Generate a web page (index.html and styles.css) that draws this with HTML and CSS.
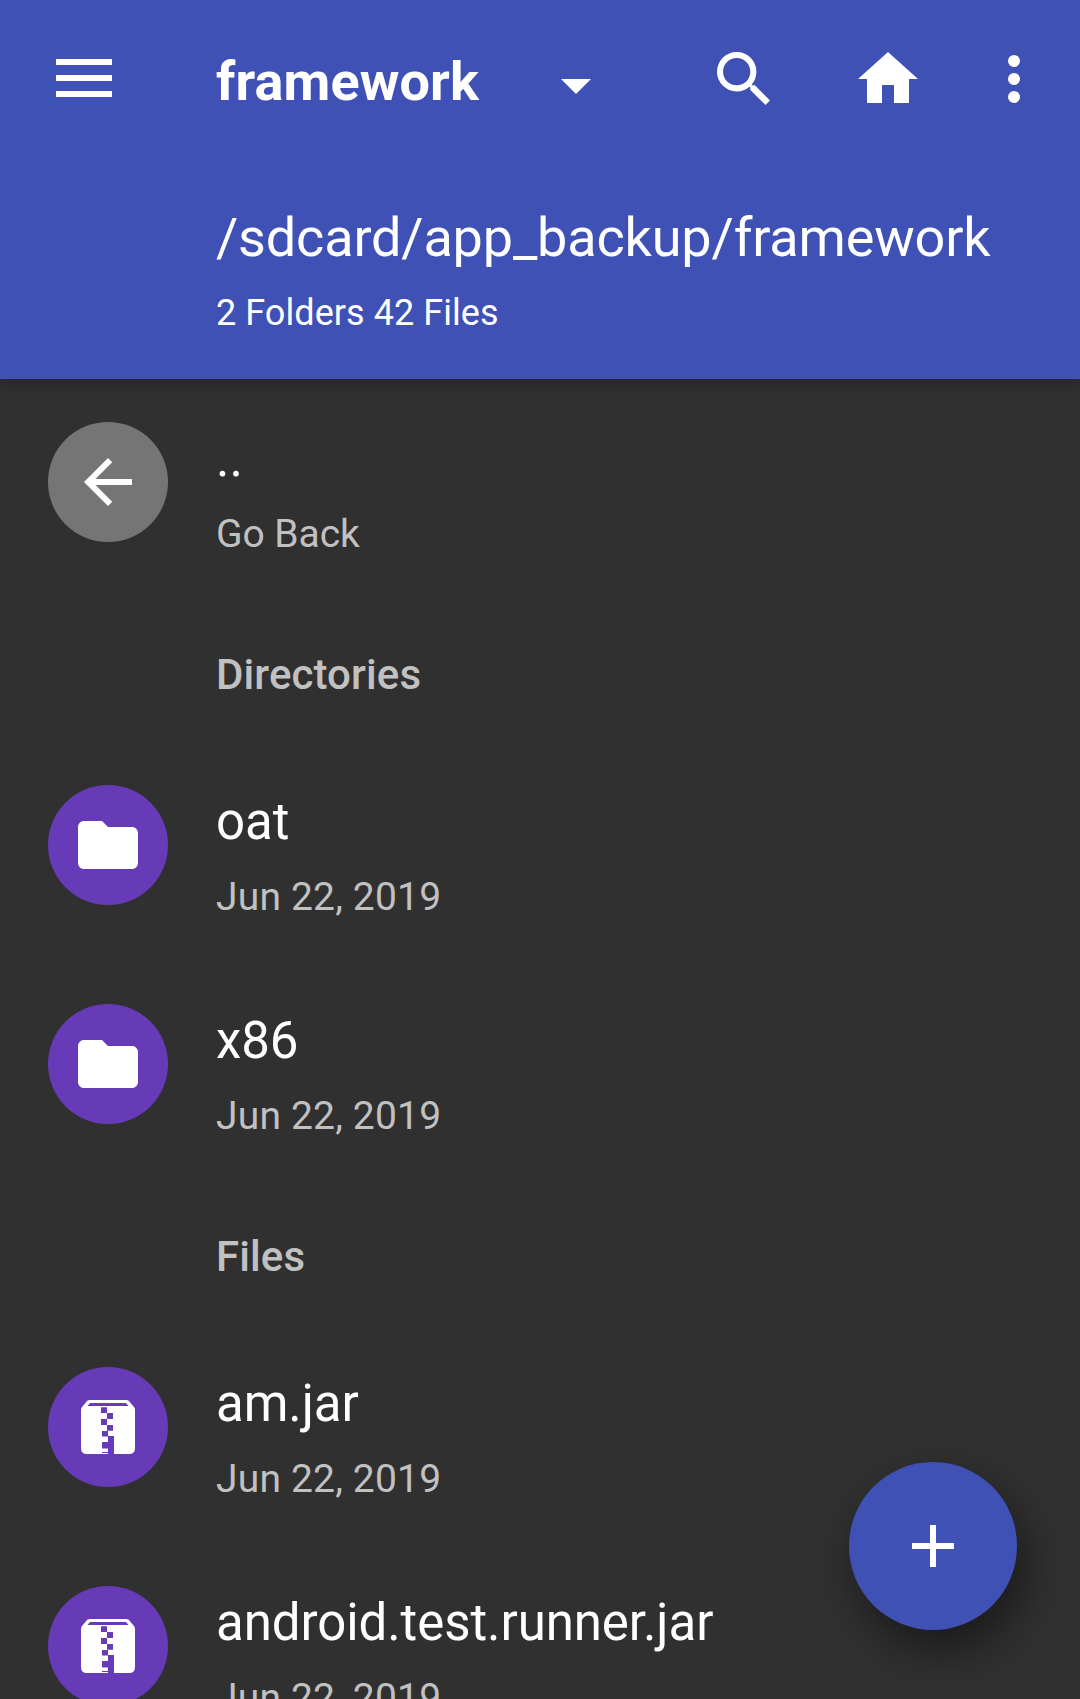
FILE: index.html
```html
<!DOCTYPE html>
<html lang="en">
<head>
<meta charset="utf-8">
<title>framework</title>
<link rel="stylesheet" href="styles.css">
</head>
<body>
<svg class="defs" aria-hidden="true">
  <symbol id="folder" viewBox="0 0 24 24"><path d="M10 4H4c-1.100 0-1.990.9-1.990 2L2 18c0 1.100.9 2 2 2h16c1.100 0 2-.9 2-2V8c0-1.100-.9-2-2-2h-8l-2-2z"/></symbol>
  <symbol id="archive" viewBox="0 0 54 54"><path d="M9 0H45Q47 0 48 1L53 7Q54 8 54 10V48Q54 54 48 54H6Q0 54 0 48V10Q0 8 1 7L6 1Q7 0 9 0Z"/><path class="cut" d="M9 3H45L47.500 6H6.500ZM20 7.300h6v5.700h-6zM26 13h6v6h-6zM20 19h6v6h-6zM26 25h6v5.700h-6zM21 31h6v5.500h-6zM27 36h6v18h-6zM21 42h6v6.500h-6zM21 52h6v1h-6z"/></symbol>
</svg>
<header class="appbar">
  <div class="toolbar">
    <svg class="menu" viewBox="0 0 56 38"><path d="M0 0h56v6H0zM0 16h56v6H0zM0 32h56v6H0z"/></svg>
    <h1 class="title">framework</h1>
    <svg class="caret" viewBox="0 0 30 15"><path d="M0 0h30L15 15z"/></svg>
    <svg class="search" viewBox="3 3 17.490 17.490"><path d="M15.500 14h-.79l-.28-.27A6.470 6.470 0 0 0 16 9.500 6.500 6.500 0 1 0 9.500 16c1.610 0 3.090-.59 4.230-1.570l.27.28v.79l5 4.990L20.490 19l-4.990-5zm-6 0C7.010 14 5 11.990 5 9.500S7.010 5 9.500 5 14 7.010 14 9.500 11.990 14 9.500 14z"/></svg>
    <svg class="home" viewBox="2 3 20 17"><path d="M10 20v-6h4v6h5v-8h3L12 3 2 12h3v8z"/></svg>
    <svg class="more" viewBox="0 0 12 48"><circle cx="6" cy="6" r="6"/><circle cx="6" cy="24" r="6"/><circle cx="6" cy="42" r="6"/></svg>
  </div>
  <div class="path">/sdcard/app_backup/framework</div>
  <div class="count">2 Folders 42 Files</div>
</header>
<main class="list">
  <div class="row"><span class="avatar back"><svg class="arrow" viewBox="4 4 16 16"><path d="M20 11H7.830l5.590-5.590L12 4l-8 8 8 8 1.410-1.410L7.830 13H20v-2z"/></svg></span><div class="info"><div class="name">..</div><div class="meta">Go Back</div></div></div>
  <h2 class="section">Directories</h2>
  <div class="row"><span class="avatar"><svg class="folder"><use href="#folder"/></svg></span><div class="info"><div class="name">oat</div><div class="meta date">Jun 22, 2019</div></div></div>
  <div class="row"><span class="avatar"><svg class="folder"><use href="#folder"/></svg></span><div class="info"><div class="name">x86</div><div class="meta date">Jun 22, 2019</div></div></div>
  <h2 class="section">Files</h2>
  <div class="row"><span class="avatar"><svg class="archive"><use href="#archive"/></svg></span><div class="info"><div class="name">am.jar</div><div class="meta date">Jun 22, 2019</div></div></div>
  <div class="row"><span class="avatar"><svg class="archive"><use href="#archive"/></svg></span><div class="info"><div class="name">android.test.runner.jar</div><div class="meta date">Jun 22, 2019</div></div></div>
</main>
<button class="fab" aria-label="Add"><svg class="plus" viewBox="0 0 42 42"><path d="M18 0h6v18h18v6H24v18h-6V24H0v-6h18z"/></svg></button>
</body>
</html>
```
FILE: styles.css
```css
* { box-sizing: border-box; }
body { margin: 0; height: 1699px; overflow: hidden; position: relative; background: #303030; color: #fff; font-family: Roboto, sans-serif; }
svg { display: block; fill: currentColor; flex: none; }
.defs { position: absolute; width: 0; height: 0; }
.appbar { position: relative; height: 379px; background: #3f51b5; box-shadow: 0 4px 12px rgba(0,0,0,.25); }
.toolbar { display: flex; align-items: center; height: 156px; padding-left: 56px; }
.menu { width: 56px; height: 38px; }
.title { width: 345px; margin: 8px 0 0 104px; font-size: 54px; line-height: 64px; font-weight: 700; letter-spacing: .12px; }
.caret { width: 30px; height: 15px; margin-top: 17px; }
.search { width: 53px; height: 53px; margin: 1px 0 0 126px; }
.home { width: 60px; height: 51px; margin: -1px 0 0 88px; }
.more { width: 12px; height: 48px; margin: 2px 0 0 90px; }
.path { margin: 50px 0 0 216px; font-size: 54px; line-height: 64px; letter-spacing: -.17px; }
.count { margin: 21px 0 0 216px; font-size: 36px; line-height: 44px; letter-spacing: .06px; }
.list { padding-top: 3px; }
.row { display: flex; height: 219px; padding: 40px 48px 0; }
.avatar { display: flex; flex: none; width: 120px; height: 120px; align-items: center; justify-content: center; border-radius: 50%; background: #673ab7; }
.back { background: #757575; }
.arrow { width: 48px; height: 48px; }
.folder { width: 72px; height: 72px; }
.archive { width: 54px; height: 54px; }
.cut { fill: #673ab7; }
.info { margin: 6px 0 0 48px; white-space: nowrap; }
.name { font-size: 51px; line-height: 62px; letter-spacing: -.07px; }
.meta { margin-top: 21px; font-size: 39px; line-height: 46px; color: #c1c1c1; letter-spacing: -.06px; }
.date { letter-spacing: .18px; }
.section { height: 144px; margin: 0; padding: 50px 0 0 216px; font-size: 42px; line-height: 48px; font-weight: 500; color: #c1c1c1; letter-spacing: .1px; }
.fab { position: absolute; left: 849px; top: 1462px; width: 168px; height: 168px; padding: 0; display: flex; align-items: center; justify-content: center; border: 0; border-radius: 50%; color: #fff; background: #3f51b5; box-shadow: 8px 20px 44px rgba(0,0,0,.45); }
.plus { width: 42px; height: 42px; }
```
